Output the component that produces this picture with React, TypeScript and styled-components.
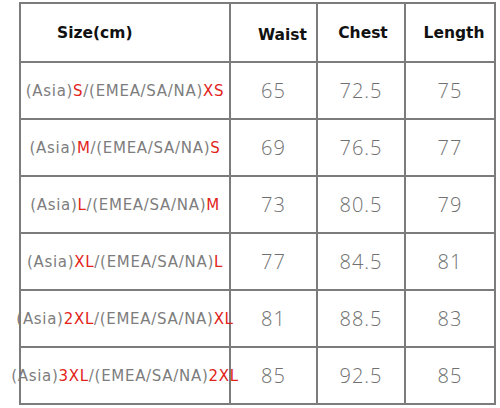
import React from 'react';
import styled, { createGlobalStyle } from 'styled-components';

const GlobalStyle = createGlobalStyle`
    html, body {
        margin: 0;
        padding: 0;
        background: #ffffff;
    }
`;

interface SizeRow {
    asia: string;
    intl: string;
    waist: string;
    chest: string;
    length: string;
}

const rows: SizeRow[] = [
    { asia: 'S', intl: 'XS', waist: '65', chest: '72.5', length: '75' },
    { asia: 'M', intl: 'S', waist: '69', chest: '76.5', length: '77' },
    { asia: 'L', intl: 'M', waist: '73', chest: '80.5', length: '79' },
    { asia: 'XL', intl: 'L', waist: '77', chest: '84.5', length: '81' },
    { asia: '2XL', intl: 'XL', waist: '81', chest: '88.5', length: '83' },
    { asia: '3XL', intl: '2XL', waist: '85', chest: '92.5', length: '85' },
];

const Page = styled.div`
    width: 500px;
    height: 408px;
    padding: 2px 0 0 19px;
    box-sizing: border-box;
    overflow: hidden;
`;

const Table = styled.div`
    display: grid;
    grid-template-columns: 208px 85px 86px 88px;
    grid-template-rows: 57px repeat(6, 55px);
    gap: 2px;
    padding: 2px;
    width: max-content;
    background-color: #7c7c7c;
`;

const HeaderCell = styled.div<{ $align?: 'start' | 'center'; $padLeft?: number; $padTop?: number }>`
    display: flex;
    align-items: center;
    justify-content: ${({ $align }) => ($align === 'start' ? 'flex-start' : 'center')};
    padding-left: ${({ $padLeft }) => $padLeft ?? 0}px;
    padding-top: ${({ $padTop }) => $padTop ?? 0}px;
    background-color: #ffffff;
    font-family: 'DejaVu Sans', sans-serif;
    font-weight: 700;
    font-size: 15.5px;
    color: #111111;
`;

// the label is wider than its column on the last rows, so it sits above the neighbours
const SizeCell = styled.div`
    position: relative;
    z-index: 1;
    display: flex;
    align-items: center;
    justify-content: center;
    background-color: #ffffff;
    white-space: nowrap;
    font-family: 'DejaVu Sans', sans-serif;
    font-size: 15px;
    letter-spacing: 0.7px;
    color: #7d7d7d;
`;

const Red = styled.span`
    color: #e2231a;
`;

const NumberCell = styled.div`
    display: flex;
    align-items: center;
    justify-content: center;
    background-color: #ffffff;
    font-family: 'Open Sans', sans-serif;
    font-weight: 300;
    font-size: 20px;
    letter-spacing: 1px;
    color: #707070;
`;

const App: React.FC = () => {
    return (
        <>
            <GlobalStyle />
            <Page>
                <Table>
                    <HeaderCell $align="start" $padLeft={36}>Size(cm)</HeaderCell>
                    <HeaderCell $padLeft={18} $padTop={4}>Waist</HeaderCell>
                    <HeaderCell $padLeft={4}>Chest</HeaderCell>
                    <HeaderCell $padLeft={8} $padTop={-2}>Length</HeaderCell>
                    {rows.map((row) => (
                        <React.Fragment key={row.asia}>
                            <SizeCell>
                                (Asia)<Red>{row.asia}</Red>/(EMEA/SA/NA)<Red>{row.intl}</Red>
                            </SizeCell>
                            <NumberCell>{row.waist}</NumberCell>
                            <NumberCell>{row.chest}</NumberCell>
                            <NumberCell>{row.length}</NumberCell>
                        </React.Fragment>
                    ))}
                </Table>
            </Page>
        </>
    );
};

export default App;
